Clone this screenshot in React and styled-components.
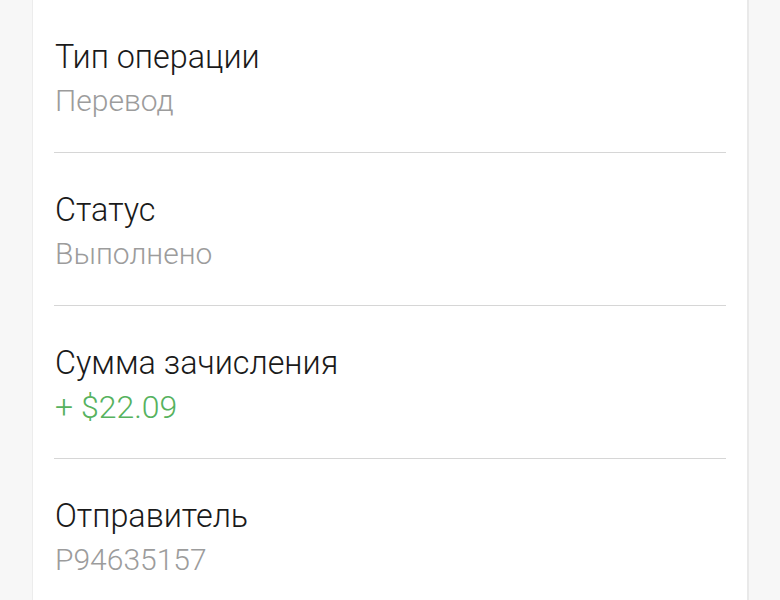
import React from "react";
import styled, { createGlobalStyle } from "styled-components";

const GlobalStyle = createGlobalStyle`
  html, body {
    margin: 0;
    padding: 0;
    background: #f7f7f7;
  }
  body {
    font-family: Roboto, "Noto Sans", sans-serif;
  }
`;

const Page = styled.div`
  width: 780px;
  height: 600px;
  overflow: hidden;
  padding: 0 31px 0 32px;
  box-sizing: border-box;
  background: #f7f7f7;
`;

const Card = styled.div`
  background: #ffffff;
  border-left: 1px solid #ececec;
  border-right: 2px solid #e9e9e9;
  padding: 0 21px;
  min-height: 600px;
  box-sizing: border-box;
`;

const Row = styled.div`
  display: flex;
  flex-direction: column;
  padding: 35px 1px 29px;
  border-bottom: 1.5px solid #d6d6d6;
`;

const Label = styled.div`
  font-size: 32.3px;
  font-weight: 300;
  line-height: 44px;
  color: #1a1a1a;
`;

const Value = styled.div`
  font-size: ${(p) => (p.positive ? "32px" : "30px")};
  font-weight: 300;
  line-height: 44px;
  color: ${(p) => (p.positive ? "#56b25e" : "#9c9c9c")};
`;

const rows = [
  { label: "Тип операции", value: "Перевод" },
  { label: "Статус", value: "Выполнено" },
  { label: "Сумма зачисления", value: "+ $22.09", positive: true },
  { label: "Отправитель", value: "P94635157" },
];

export default function App() {
  return (
    <Page>
      <GlobalStyle />
      <Card>
        {rows.map((r) => (
          <Row key={r.label}>
            <Label>{r.label}</Label>
            <Value positive={r.positive}>{r.value}</Value>
          </Row>
        ))}
      </Card>
    </Page>
  );
}
